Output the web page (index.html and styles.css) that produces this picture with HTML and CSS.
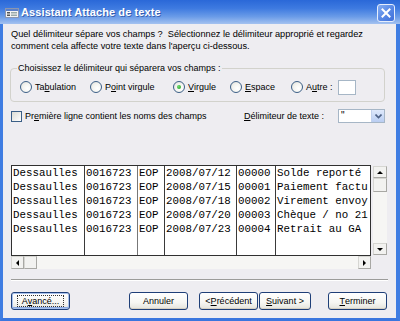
FILE: index.html
```html
<!DOCTYPE html>
<html lang="fr">
<head>
<meta charset="utf-8">
<title>Assistant Attache de texte</title>
<link rel="stylesheet" href="styles.css">
</head>
<body>
<div class="window">
  <div class="titlebar">
    <svg class="appicon" width="14" height="10" viewBox="0 0 14 10">
      <rect x="0.5" y="0.5" width="13" height="9" fill="#f4f4f4" stroke="#8a96b0"/>
      <rect x="1" y="1" width="12" height="2" fill="#5b7fc8"/>
      <rect x="2" y="4" width="3" height="1.5" fill="#555"/>
      <rect x="6" y="4" width="6" height="1.5" fill="#9aa"/>
      <rect x="2" y="6.5" width="3" height="1.5" fill="#555"/>
      <rect x="6" y="6.5" width="6" height="1.5" fill="#9aa"/>
    </svg>
    <span class="title">Assistant Attache de texte</span>
    <div class="close">
      <svg width="10" height="10" viewBox="0 0 10 10"><path d="M1.5 1.5 L8.5 8.5 M8.5 1.5 L1.5 8.5" stroke="#fff" stroke-width="2" stroke-linecap="square"/></svg>
    </div>
  </div>
  <div class="body">
    <p class="intro">Quel délimiteur sépare vos champs ?&nbsp; Sélectionnez le délimiteur approprié et regardez<br>comment cela affecte votre texte dans l'aperçu ci-dessous.</p>
    <fieldset class="group">
      <legend>Choisissez le délimiteur qui séparera vos champs :</legend>
      <div class="radios">
        <label class="radio w-tab"><span class="circle"></span>Ta<u>b</u>ulation</label>
        <label class="radio w-pv"><span class="circle"></span>P<u>o</u>int virgule</label>
        <label class="radio w-v"><span class="circle checked"></span><u>V</u>irgule</label>
        <label class="radio w-esp"><span class="circle"></span><u>E</u>space</label>
        <label class="radio"><span class="circle"></span>A<u>u</u>tre :</label>
        <span class="other-box"></span>
      </div>
    </fieldset>
    <div class="options">
      <label class="check"><span class="box"></span>Pr<u>e</u>mière ligne contient les noms des champs</label>
      <span class="delim-label"><u>D</u>élimiteur de texte :</span>
      <div class="combo"><span class="combo-val">"</span><span class="combo-btn"><svg width="7" height="5" viewBox="0 0 7 5"><path d="M0.5 0.5 L3.5 3.5 L6.5 0.5" fill="none" stroke="#4d6185" stroke-width="1.6"/></svg></span></div>
    </div>
    <div class="preview">
      <div class="grid-row">
        <div class="grid">
          <div class="col c1"><div>Dessaulles</div><div>Dessaulles</div><div>Dessaulles</div><div>Dessaulles</div><div>Dessaulles</div></div>
          <div class="col c2"><div>0016723</div><div>0016723</div><div>0016723</div><div>0016723</div><div>0016723</div></div>
          <div class="col c3"><div>EOP</div><div>EOP</div><div>EOP</div><div>EOP</div><div>EOP</div></div>
          <div class="col c4"><div>2008/07/12</div><div>2008/07/15</div><div>2008/07/18</div><div>2008/07/20</div><div>2008/07/23</div></div>
          <div class="col c5"><div>00000</div><div>00001</div><div>00002</div><div>00003</div><div>00004</div></div>
          <div class="col c6"><div>Solde reporté</div><div>Paiement factu</div><div>Virement envoy</div><div>Chèque / no 21</div><div>Retrait au GA</div></div>
        </div>
        <div class="vscroll">
          <span class="sbtn"><span class="tri up"></span></span>
          <span class="thumb-v"></span>
          <span class="track"></span>
          <span class="sbtn"><span class="tri down"></span></span>
        </div>
      </div>
      <div class="hscroll">
        <span class="sbtn"><span class="tri left"></span></span>
        <span class="thumb-h"></span>
        <span class="track"></span>
        <span class="sbtn"><span class="tri right"></span></span>
      </div>
    </div>
    <div class="sep"></div>
    <div class="buttons">
      <button class="btn default"><span class="focus">A<u>v</u>ancé...</span></button>
      <button class="btn annuler">Annuler</button>
      <button class="btn prev">&lt; <u>P</u>récédent</button>
      <button class="btn next"><u>S</u>uivant &gt;</button>
      <button class="btn finish"><u>T</u>erminer</button>
    </div>
  </div>
</div>
</body>
</html>
```
FILE: styles.css
```css
html, body {
  margin: 0;
  padding: 0;
}
body {
  width: 400px;
  height: 321px;
  overflow: hidden;
  font-family: "Liberation Sans", Arial, sans-serif;
  font-size: 9px;
  color: #000;
}
.window {
  width: 400px;
  height: 321px;
  display: flex;
  flex-direction: column;
}
.titlebar {
  height: 24px;
  flex: none;
  display: flex;
  align-items: center;
  background: linear-gradient(to bottom, #2a68d8 0%, #3e7ae0 35%, #6b9ce8 70%, #a4c2f0 100%);
  padding: 0 5px 0 5px;
  box-sizing: border-box;
}
.appicon {
  flex: none;
  margin-top: 2px;
}
.title {
  margin-left: 2px;
  color: #fff;
  font-weight: bold;
  font-size: 11px;
  letter-spacing: 0.1px;
  text-shadow: 1px 1px 0 rgba(10, 40, 120, 0.5);
  flex: 1;
}
.close {
  width: 16px;
  height: 16px;
  border: 1px solid #e6eefc;
  border-radius: 3px;
  background: linear-gradient(135deg, #86aef2 0%, #5a8ae6 50%, #3f70da 100%);
  display: flex;
  align-items: center;
  justify-content: center;
  margin-top: 2px;
}
.body {
  flex: 1;
  background: #eeedf1;
  border-left: 3px solid #3f7de2;
  border-right: 4px solid #3f7de2;
  border-bottom: 3px solid #3a76de;
  padding: 4px 9px 0 7px;
  display: flex;
  flex-direction: column;
  min-height: 0;
}
.intro {
  margin: 0 0 0 1px;
  line-height: 12px;
  font-size: 9.2px;
}
.group {
  margin: 10px 2px 0 0;
  border: 1px solid #d2d2cc;
  border-radius: 4px;
  padding: 6px 4px 7px 9px;
  min-width: 0;
}
.group legend {
  padding: 0 1px;
  margin-left: -3px;
  line-height: 12px;
}
.radios {
  display: flex;
  align-items: center;
  height: 14px;
}
.radio {
  display: flex;
  align-items: center;
  flex: none;
}
.w-tab { width: 70px; }
.w-pv { width: 83px; }
.w-v { width: 57px; }
.w-esp { width: 61px; }
.circle {
  width: 10px;
  height: 10px;
  border: 1px solid #3b5f87;
  border-radius: 50%;
  background: radial-gradient(circle at 65% 65%, #fff 0%, #f4f4f0 50%, #dcdcd4 100%);
  margin-right: 3px;
  box-sizing: content-box;
  display: flex;
  align-items: center;
  justify-content: center;
}
.circle.checked::after {
  content: "";
  width: 4px;
  height: 4px;
  border-radius: 50%;
  background: radial-gradient(circle at 35% 35%, #6fdc6f, #1f9a1f);
}
.other-box {
  width: 16px;
  height: 13px;
  margin-left: 5px;
  background: #fff;
  border: 1px solid #a6b6c6;
  flex: none;
}
.options {
  margin-top: 7px;
  height: 14px;
  display: flex;
  align-items: center;
}
.check {
  flex: 1;
  display: flex;
  align-items: center;
  margin-left: 1px;
}
.box {
  width: 9px;
  height: 9px;
  border: 1px solid #3b5f87;
  background: linear-gradient(135deg, #dcdcd4, #fff);
  margin-right: 3px;
  flex: none;
}
.delim-label {
  width: 94px;
  flex: none;
}
.combo {
  width: 47px;
  height: 14px;
  box-sizing: border-box;
  border: 1px solid #a6b6c6;
  background: #fff;
  display: flex;
  margin-right: 2px;
}
.combo-val {
  flex: 1;
  padding-left: 2px;
  line-height: 11px;
  font-size: 10px;
}
.combo-btn {
  width: 12px;
  background: linear-gradient(to bottom, #dfe9fb, #b9cdf2);
  border-left: 1px solid #c2d2ee;
  display: flex;
  align-items: center;
  justify-content: center;
}
.preview {
  margin-top: 42px;
  display: flex;
  flex-direction: column;
}
.grid-row {
  display: flex;
  align-items: flex-start;
}
.grid {
  width: 361px;
  height: 91px;
  box-sizing: border-box;
  border: 1px solid #303030;
  background: #fff;
  display: flex;
  overflow: hidden;
  font-family: "Liberation Mono", "Courier New", monospace;
  font-size: 10.8px;
  line-height: 14px;
  margin-left: 1px;
}
.col {
  flex: none;
  height: 100%;
  border-right: 1px solid #3a3a3a;
  white-space: nowrap;
  overflow: hidden;
  padding-left: 1px;
  box-sizing: border-box;
}
.c1 { width: 73px; }
.c2 { width: 53px; border-right-color: #777; }
.c3 { width: 27px; }
.c4 { width: 72px; }
.c5 { width: 39px; }
.c6 { flex: 1; border-right: none; }
.vscroll {
  width: 14px;
  height: 89px;
  margin-left: 2px;
  margin-top: 1px;
  display: flex;
  flex-direction: column;
  background: #f6f6f4;
}
.hscroll {
  width: 360px;
  height: 13px;
  margin-left: 1px;
  display: flex;
  background: #f6f6f4;
}
.track { flex: 1; }
.sbtn, .thumb-v, .thumb-h {
  box-sizing: border-box;
  background: #f2f2f0;
  border: 1px solid #d6d6d2;
  border-right-color: #a8a8a4;
  border-bottom-color: #a8a8a4;
  display: flex;
  align-items: center;
  justify-content: center;
  flex: none;
}
.vscroll .sbtn { height: 12px; width: 14px; }
.hscroll .sbtn { width: 13px; height: 13px; }
.thumb-v { height: 14px; width: 14px; }
.thumb-h { width: 13px; height: 13px; }
.tri { width: 0; height: 0; border-style: solid; }
.tri.up { border-width: 0 3px 3px 3px; border-color: transparent transparent #000 transparent; }
.tri.down { border-width: 3px 3px 0 3px; border-color: #000 transparent transparent transparent; }
.tri.left { border-width: 3px 3px 3px 0; border-color: transparent #000 transparent transparent; }
.tri.right { border-width: 3px 0 3px 3px; border-color: transparent transparent transparent #000; }
.sep {
  margin-top: 10px;
  margin-right: -1px;
  margin-left: 1px;
  height: 1px;
  background: #9c9c9a;
  border-bottom: 1px solid #fff;
}
.buttons {
  margin-top: 11px;
  display: flex;
  height: 18px;
}
.btn {
  font-family: "Liberation Sans", Arial, sans-serif;
  font-size: 9px;
  color: #000;
  height: 18px;
  width: 59px;
  padding: 0;
  border: 1px solid #1f3f78;
  border-radius: 3px;
  background: linear-gradient(to bottom, #ffffff 0%, #f6f6f2 60%, #e4e3dc 100%);
  box-shadow: inset 0 -1px 0 #d6d0c2;
  display: flex;
  align-items: center;
  justify-content: center;
  flex: none;
}
.default {
  margin-left: 1px;
  box-shadow: inset 0 0 0 1px #a8c2ee, inset 0 -2px 0 #89a8e0;
}
.focus {
  border: 1px dotted #333;
  padding: 0 4px;
  line-height: 10px;
}
.annuler { margin-left: 59px; }
.prev { margin-left: 11px; }
.next { margin-left: 1px; width: 52px; }
.finish { margin-left: 17px; }
```
